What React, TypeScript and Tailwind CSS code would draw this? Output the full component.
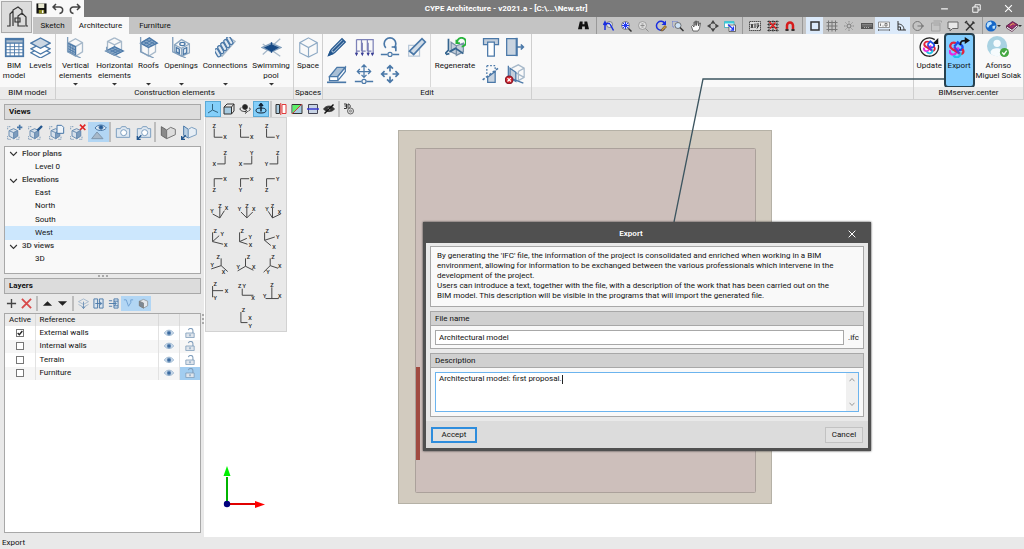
import { useState } from "react";
import type { ReactNode } from "react";
import { clsx } from "clsx";

type IconProps = { children: ReactNode; className?: string; stroke?: string };

// All line icons are drawn on a 24x24 grid
function Icon({ children, className = "size-5", stroke = "#4a78a8" }: IconProps) {
  return (
    <svg viewBox="0 0 24 24" aria-hidden="true" fill="none" stroke={stroke} strokeWidth="1.5" className={clsx("shrink-0", className)}>
      {children}
    </svg>
  );
}

const CUBE = "M12 2L20 6.500V17L12 22L4 17V6.500ZM4 6.500L12 11L20 6.500M12 11V22";

const icons = {
  grid: (
    <>
      <rect x="2" y="2" width="20" height="20" fill="#fff" strokeWidth="2" />
      <path d="M2 3H22V7H2Z" fill="#a9bacb" />
      <path d="M7 7V22M12 7V22M17 7V22M2 11H22M2 14.500H22M2 18H22" strokeWidth="1" />
    </>
  ),
  levels: (
    <>
      <path d="M1 18L12 12L23 18L12 24Z" fill="#fff" />
      <path d="M1 13.500L12 8L23 13.500L12 19.500Z" fill="#fff" />
      <path d="M1 7L12 1L23 7L12 13Z" fill="#ccd7e3" />
    </>
  ),
  vertical: (
    <>
      <path d={CUBE} stroke="#a7b9ca" />
      <path d="M3 7L12 11V21L3 16Z" fill="#9bb4cd" />
      <path d="M3 10L12 15M3 13L12 18M6 9V17M9 10V19" strokeWidth="1" />
      <path d="M3 0V17L18 24" stroke="#7f9dbb" />
    </>
  ),
  horizontal: (
    <>
      <path d="M12 1L20 5V15M12 1L4 5V15M4 5L12 9L20 5M12 9V13" stroke="#a7b9ca" />
      <path d="M2 16L12 11L22 16L12 21Z" fill="#88a8c8" />
      <path d="M6 14L16 19M9 12.500L19 17.500M6 18L16 13M9 19.500L19 14.500" strokeWidth="1" />
      <path d="M3 11V16L19 24" stroke="#7f9dbb" />
    </>
  ),
  roofs: (
    <>
      <path d={CUBE} stroke="#a7b9ca" />
      <path d="M3 7L13 1L22 7L12 12Z" fill="#88a8c8" />
      <path d="M6 5L16 10M9 3L19 8M6 9L16 3M9 11L19 5" strokeWidth="1" />
      <path d="M3 0V17L18 24" stroke="#7f9dbb" />
    </>
  ),
  openings: (
    <>
      <path d="M4 9L12 3L21 8V18L12 22L4 17Z" stroke="#8fa9c2" />
      <path d="M4 9L12 13L21 8M12 13V22" stroke="#8fa9c2" />
      <path d="M6 12L9.500 14V19L6 17ZM14 14L18 12V18L14 20Z" fill="#dbe5ef" />
      <ellipse cx="13" cy="8" rx="3" ry="1.800" />
      <path d="M2 0V17L17 24" stroke="#7f9dbb" />
    </>
  ),
  connections: (
    <>
      <path d="M1 16L17 1L23 5L8 22Z" stroke="#a7b9ca" />
      {[0, 3.5, 7, 10.5, 14].map((d) => (
        <rect key={d} x={1 + d} y={13 - d} width="4" height="10" rx="2" transform={`rotate(-30 ${3 + d} ${18 - d})`} fill="#e1e9f1" />
      ))}
    </>
  ),
  pool: (
    <>
      <path d="M2 20L22 2M2 8L22 22" stroke="#a7b9ca" />
      <path d="M1 12L12 7L23 12L12 17Z" fill="#9bb4cd" stroke="#7f9dbb" />
      <path d="M5 12L12 9L19 12L12 16Z" fill="#174a86" stroke="#174a86" />
      <path d="M12 6V18" stroke="#174a86" />
    </>
  ),
  space: <path d="M12 1L22 6.500V18L12 23L2 18V6.500ZM2 6.500L12 12L22 6.500M12 12V23" stroke="#8da9c4" strokeWidth="1.300" />,
  pencil: (
    <>
      <path d="M2 22L5 15L18 2L22 6L9 19Z" fill="#a9c0d8" stroke="#22568e" />
      <path d="M7 17L20 4" stroke="#22568e" strokeWidth="2" />
      <path d="M2 22L4 17L7 20Z" fill="#22568e" stroke="#22568e" />
    </>
  ),
  columns: (
    <>
      <path d="M3 3H9V17M3 3V21M9 3H16V17M10 7V21M16 3H23V17M17 7V21M23 3V21M3 17H7M10 17H14M17 17H21" stroke="#7d82b8" />
      <path d="M1 19H5L3 23ZM8 19H12L10 23ZM15 19H19L17 23ZM20 19H24L22 23Z" fill="#393e95" stroke="none" />
    </>
  ),
  rotate: (
    <>
      <path d="M7 13A7 7 0 1 1 17 13" strokeWidth="2" />
      <path d="M14 12H19V17M1 21H9M15 21H23" strokeWidth="2" />
      <circle cx="12" cy="21" r="2.500" />
    </>
  ),
  ruler: (
    <>
      <path d="M2 10H15V23H2Z" stroke="#b8c8d8" />
      <path d="M3 17L18 2L22 6L8 21Z" fill="#d2dde8" strokeWidth="2" />
    </>
  ),
  eraser: (
    <>
      <path d="M3 15L12 4H22L13 15Z" fill="#a9bfd5" />
      <path d="M3 15H13V20H3ZM13 15L22 4V9L13 20" fill="#fff" />
      <path d="M0 22H23" strokeWidth="2" />
    </>
  ),
  moveNode: (
    <>
      <path d="M12 1V16M4 9H20M9 4L12 1L15 4M7 6L4 9L7 12M17 6L20 9L17 12M9 13L12 16L15 13" />
      <path d="M1 21H9M15 21H23" strokeWidth="2" />
      <circle cx="12" cy="21" r="2.500" />
    </>
  ),
  move: <path d="M12 2V9M12 15V22M2 12H9M15 12H22M8.500 5.500L12 2L15.500 5.500M5.500 8.500L2 12L5.500 15.500M18.500 8.500L22 12L18.500 15.500M8.500 18.500L12 22L15.500 18.500" strokeWidth="2" />,
  regenerate: (
    <>
      <path d="M7 6L13 10V20L7 17ZM13 10L21 7V17L13 21Z" fill="#c3cedb" stroke="#7990a8" />
      <path d="M4 2V15L0 19M5 17L12 13L21 19M5 19L1 20" stroke="#35658f" strokeWidth="2" />
      <path d="M14 7A5 5 0 1 1 19 11" stroke="#28b43c" strokeWidth="2.200" />
      <path d="M17 7H13V3" stroke="#28b43c" strokeWidth="2" />
    </>
  ),
  tee: (
    <>
      <path d="M3 2H21V9H3Z" fill="#c3cedb" />
      <path d="M8 6H16V23H8Z" fill="#fff" />
    </>
  ),
  extend: (
    <>
      <path d="M2 2H14V22H2Z" fill="#c9d4e0" />
      <path d="M14 1V23" strokeWidth="2.500" />
      <path d="M14 12H22M19 9L22 12L19 15" strokeWidth="2" />
    </>
  ),
  trim: (
    <>
      <path d="M7 2H17V10M7 2V14" strokeDasharray="2 2" />
      <path d="M8 16L17 9V22H8Z" fill="#c9d4e0" />
      <path d="M2 19L22 4" strokeDasharray="3 2" strokeWidth="2" />
    </>
  ),
  removeView: (
    <>
      <path d="M8 5L16 1L23 5V16L16 20M23 5L16 9M16 9V20M12 10L23 16" stroke="#a7b9ca" />
      <path d="M4 2V16M6 5L13 10V21L6 17Z" fill="#c3cedb" />
      <path d="M4 16L22 23" />
      <circle cx="5" cy="19" r="4.500" fill="#d8262c" stroke="#8c1b2b" />
      <path d="M3 17L7 21M7 17L3 21" stroke="#fff" />
    </>
  ),
};

// Interlaced three-colour BIMserver.center mark
function BimMark() {
  return (
    <g strokeWidth="2.6" fill="none">
      <path d="M11 4C5 2 2 8 7 11L13 14" stroke="#e3233c" />
      <path d="M9 8L13 3L18 7C20 11 16 13 13 11" stroke="#1c50e8" />
      <path d="M4 12C3 17 9 19 11 15L14 9" stroke="#e82ae0" />
      <path d="M18 11C22 14 17 19 14 15L8 11" stroke="#e3233c" />
      <path d="M8 18C11 22 17 20 16 15" stroke="#20c4ea" />
      <path d="M9 8L15 16" stroke="#5a36dc" />
    </g>
  );
}

type RibbonItem = { icon: ReactNode; lines: string[]; width: string; menu?: boolean };

function RibbonButton({ icon, lines, width, menu }: RibbonItem) {
  return (
    <button className={clsx("flex flex-col items-center pt-[3px] hover:bg-[#e3f1fb]", width)}>
      <Icon className="size-[21px]">{icon}</Icon>
      <span className="mt-[3px] text-center leading-[10px] whitespace-nowrap">
        {lines.map((line) => <span key={line} className="block">{line}</span>)}
      </span>
      {menu && <Caret className={clsx("w-[5px]", lines.length === 1 ? "mt-3" : "mt-[2px]")} />}
    </button>
  );
}

function Caret({ className }: { className?: string }) {
  return (
    <svg viewBox="0 0 6 3" className={className} aria-hidden="true">
      <path d="M0 0H6L3 3Z" fill="#333" />
    </svg>
  );
}

function RibbonGroup({ label, children, className }: { label: string; children: ReactNode; className?: string }) {
  return (
    <section className={clsx("flex flex-col border-r border-[#cfcfcf]", className)}>
      <div className="flex h-[53px] shrink-0 px-px">{children}</div>
      <h2 className="h-3 bg-[#ebebeb] text-center leading-3 whitespace-nowrap">{label}</h2>
    </section>
  );
}

const MODEL_ITEMS: RibbonItem[] = [
  { icon: icons.grid, lines: ["BIM", "model"], width: "w-[26px]" },
  { icon: icons.levels, lines: ["Levels"], width: "w-[27px]" },
];

const ELEMENT_ITEMS: RibbonItem[] = [
  { icon: icons.vertical, lines: ["Vertical", "elements"], width: "w-[37px]", menu: true },
  { icon: icons.horizontal, lines: ["Horizontal", "elements"], width: "w-[41px]", menu: true },
  { icon: icons.roofs, lines: ["Roofs"], width: "w-[27px]", menu: true },
  { icon: icons.openings, lines: ["Openings"], width: "w-[38px]", menu: true },
  { icon: icons.connections, lines: ["Connections"], width: "w-[50px]", menu: true },
  { icon: icons.pool, lines: ["Swimming", "pool"], width: "w-[42px]", menu: true },
];

const EDIT_TOOLS = [
  { name: "Edit", icon: icons.pencil },
  { name: "Copy columns", icon: icons.columns },
  { name: "Rotate", icon: icons.rotate },
  { name: "Measure", icon: icons.ruler },
  { name: "Delete", icon: icons.eraser },
  { name: "Move node", icon: icons.moveNode },
  { name: "Move", icon: icons.move },
];

const WALL_TOOLS = [
  { name: "Join", icon: icons.tee },
  { name: "Extend", icon: icons.extend },
  { name: "Trim", icon: icons.trim },
  { name: "Remove", icon: icons.removeView },
];

function Ribbon() {
  return (
    <div className="flex h-[66px] shrink-0 border-b border-[#cfcfcf] bg-[#f9f9f9]">
      <RibbonGroup label="BIM model" className="w-14">
        {MODEL_ITEMS.map((item) => <RibbonButton key={item.lines[0]} {...item} />)}
      </RibbonGroup>
      <RibbonGroup label="Construction elements" className="w-[238px]">
        {ELEMENT_ITEMS.map((item) => <RibbonButton key={item.lines[0]} {...item} />)}
      </RibbonGroup>
      <RibbonGroup label="Spaces" className="w-[29px]">
        <RibbonButton icon={icons.space} lines={["Space"]} width="w-[27px]" />
      </RibbonGroup>
      <RibbonGroup label="Edit" className="w-[209px]">
        <div className="grid w-[107px] grid-cols-4 border-r border-[#d8d8d8]">
          {EDIT_TOOLS.map((tool) => (
            <button key={tool.name} aria-label={tool.name} className="grid place-items-center">
              <Icon>{tool.icon}</Icon>
            </button>
          ))}
        </div>
        <RibbonButton icon={icons.regenerate} lines={["Regenerate"]} width="w-[48px]" />
        <div className="grid w-12 grid-cols-2">
          {WALL_TOOLS.map((tool) => (
            <button key={tool.name} aria-label={tool.name} className="grid place-items-center">
              <Icon>{tool.icon}</Icon>
            </button>
          ))}
        </div>
      </RibbonGroup>
      <div className="flex flex-1 flex-col justify-end border-r border-[#cfcfcf]">
        <div className="h-3 bg-[#ebebeb]" />
      </div>
      <RibbonGroup label="BIMserver.center" className="w-[110px]">
        <button className="flex w-[29px] flex-col items-center pt-[3px]">
          <Icon className="size-[21px]">
            <path d="M18 3A10.500 10.500 0 1 0 22 9" stroke="#222" />
            <path d="M22 1V8H15Z" fill="#111" stroke="none" />
            <g transform="translate(2.500 2.500) scale(.8)"><BimMark /></g>
          </Icon>
          <span className="mt-[3px] leading-[10px]">Update</span>
        </button>
        <button className="-mt-px flex h-[55px] w-[31px] shrink-0 flex-col items-center rounded-[4px] border-2 border-[#27414f] bg-[#83ceff] pt-[2px]">
          <Icon className="size-[21px]">
            <g transform="translate(-3 3)"><BimMark /></g>
            <path d="M13 9C13 4 16 4 19 4" stroke="#111" strokeWidth="2" />
            <path d="M18 0L24 4L18 8Z" fill="#111" stroke="none" />
          </Icon>
          <span className="mt-[3px] leading-[10px]">Export</span>
        </button>
        <button className="flex w-12 flex-col items-center pt-[2px]">
          <Icon className="size-[22px]" stroke="none">
            <circle cx="11" cy="11" r="11" fill="#a9d2e2" />
            <circle cx="11" cy="8" r="4" fill="#f6fbfd" />
            <path d="M4 19V17C5 12 17 12 18 17V19C14 23 8 23 4 19Z" fill="#f6fbfd" />
            <circle cx="19" cy="18" r="5" fill="#45a843" />
            <path d="M16.500 18L18.500 20L21.500 16" stroke="#fff" />
          </Icon>
          <span className="mt-[3px] text-center leading-[10px] whitespace-nowrap">
            <span className="block">Afonso</span>
            <span className="block">Miguel Solak</span>
          </span>
        </button>
      </RibbonGroup>
    </div>
  );
}

type Tool = { name: string; icon: ReactNode; on?: boolean };

const NAV_TOOLS: Tool[] = [
  { name: "Previous zoom", icon: <><circle cx="13" cy="9" r="6" fill="#dfe6ee" stroke="#666" /><path d="M4 20V7H14M1 10L4 4L7 10M14 8L21 21" stroke="#1a2fe0" strokeWidth="3" /></> },
  { name: "Zoom all", icon: <><circle cx="11" cy="11" r="8" fill="#e8ebff" stroke="#555" /><path d="M11 4V18M4 11H18M6 6L16 16M16 6L6 16" stroke="#2038f0" strokeWidth="2" /><path d="M17 17L23 23" stroke="#333" strokeWidth="3" /></> },
  { name: "Zoom out", icon: <><circle cx="11" cy="11" r="8" fill="#ddd" stroke="#8e8e8e" /><path d="M7 11H15M9 8H13M9 14H13M17 17L23 23" stroke="#8e8e8e" strokeWidth="2" /></> },
  { name: "Redraw", icon: <><path d="M19 6A9 9 0 1 0 19 17" stroke="#1a2fe0" strokeWidth="3" /><path d="M22 1V10H13Z" fill="#1a2fe0" stroke="none" /><path d="M11 21L20 11L23 14L15 22Z" fill="#c79a3c" stroke="#6b4c1a" /></> },
  { name: "Zoom window", icon: <><path d="M1 3H11V14H1Z" stroke="#4a64d8" strokeDasharray="2 2" /><circle cx="12" cy="11" r="6" fill="#cfe4f8" stroke="#555" /><path d="M16 15L23 22" stroke="#333" strokeWidth="3" /></> },
  { name: "Pan", icon: <path d="M6 22L3 13L5 11L8 14V4H10V11L11 2H13V11L15 3H17V12L19 6H21L19 17L16 22Z" fill="#fff" stroke="#444" /> },
  { name: "Orbit", icon: <><circle cx="12" cy="12" r="6" stroke="#555" strokeWidth="2" /><path d="M12 0L16 6H8ZM12 24L16 18H8ZM0 12L6 8V16ZM24 12L18 8V16Z" fill="#444" stroke="none" /></> },
  { name: "Windows", icon: <><path d="M1 3H20V15H1Z" fill="#fff" stroke="#2aa7b8" /><path d="M1 3H20V7H1Z" fill="#39cddb" stroke="none" /><path d="M10 10H23V23H10Z" fill="#fff" stroke="#444" /><path d="M8 9L19 19M19 13V20H13" stroke="#2038f0" strokeWidth="2.500" /></> },
];

const SNAP_TOOLS: Tool[] = [
  { name: "DXF templates", icon: <><path d="M1 3H23V21H1Z" fill="#ddd" stroke="#222" strokeDasharray="3 1" /><path d="M4 8L8 16M8 8L4 16M12 7V16M15 8H20M15 12H19M16 17L20 10" stroke="#222" strokeWidth="2" /></> },
  { name: "Template snaps", icon: <><path d="M1 3H23M1 9H23M1 15H23M1 21H23M4 1V23M12 1V23M20 1V23" stroke="#333" strokeWidth="2" strokeDasharray="3 1" /><path d="M5 4L19 18M17 5L6 17" stroke="#e02020" strokeWidth="3" /></> },
  { name: "Magnet", icon: <><path d="M6 21V11A6 6 0 0 1 18 11V21" stroke="#d61c1c" strokeWidth="5" /><path d="M3 20H9M15 20H21" stroke="#333" strokeWidth="4" /></> },
];

const DRAW_TOOLS: Tool[] = [
  { name: "Frame", on: true, icon: <path d="M4 4H20V20H4Z" strokeWidth="3" /> },
  { name: "Grid", icon: <path d="M5 1V23M12 1V23M19 1V23M1 5H23M1 12H23M1 19H23" stroke="#777" strokeWidth="2" /> },
  { name: "Point", icon: <><circle cx="12" cy="12" r="4" stroke="#777" strokeWidth="2" /><path d="M12 2V5M12 19V22M2 12H5M19 12H22M5 5L7 7M17 17L19 19M19 5L17 7M5 19L7 17" stroke="#888" strokeWidth="2" /></> },
  { name: "Keyboard", icon: <><path d="M0 6H24V18H0Z" fill="#555" stroke="none" /><path d="M3 9H21M3 12H21M6 15H18" stroke="#ccc" strokeDasharray="2 2" /></> },
  { name: "Coordinates", on: true, icon: <><path d="M1 4H23V15H1Z" fill="#f4f4f4" stroke="#777" /><path d="M5 7V12M9 12H11M14 7H18V12H14ZM1 20H23M1 18V22M23 18V22" stroke="#555" /></> },
  { name: "Orthogonal", on: true, icon: <path d="M6 2V20H22M6 8C14 8 18 13 18 20M6 14H11V20" strokeWidth="2" /> },
  { name: "Polar", icon: <><circle cx="11" cy="12" r="9" stroke="#777" strokeWidth="2" /><path d="M11 12H23M19 9L23 12L19 15" stroke="#777" strokeWidth="2" /></> },
  { name: "Clipboard", icon: <path d="M3 6H20V22H3ZM7 2H23V5M7 10H20" stroke="#a2a2a2" strokeWidth="2" /> },
  { name: "Comment", icon: <path d="M2 4H22V17H11L6 22V17H2Z" fill="#e8e8e8" stroke="#666" strokeWidth="2" /> },
  { name: "Settings", icon: <><path d="M4 21L19 5M5 5L19 20" stroke="#333" strokeWidth="3" /><path d="M2 6L6 2M17 3L21 7" stroke="#333" strokeWidth="3" /></> },
];

function ToolStrip({ tools, className }: { tools: Tool[]; className: string }) {
  return (
    <div className={clsx("flex h-full border-r border-[#999]", className)}>
      {tools.map((tool) => (
        <button key={tool.name} aria-label={tool.name} className={clsx("grid flex-1 place-items-center", tool.on && "bg-[#dceafa]")}>
          <Icon className="size-3" stroke="#333">{tool.icon}</Icon>
        </button>
      ))}
    </div>
  );
}

function Header() {
  return (
    <header className="flex shrink-0">
      <button aria-label="CYPE Architecture" className="grid h-[34px] w-[33px] shrink-0 place-items-center border-2 border-[#f4f4f4] bg-[#dcdcdc] outline outline-1 -outline-offset-2 outline-[#aaa]">
        <svg viewBox="0 0 24 24" className="size-6" fill="none" stroke="#333" strokeWidth="1.200" aria-hidden="true">
          <path d="M2 21H5V9L8 6V21M8 19V5L13 2L17 5V10M10 13H15V17H10ZM13 17V11L17 8L21 12V21H23M13 17V21H20" />
        </svg>
      </button>
      <div className="min-w-0 flex-1">
        <div className="flex h-[17px] items-center justify-between bg-[#797979]">
          <div className="flex h-full w-[51px] items-center justify-around bg-[#f9f9f9]">
            <button aria-label="Save">
              <Icon className="size-[11px]" stroke="none">
                <path d="M1 1H23V23H1Z" fill="#111" />
                <path d="M5 1H18V11H5Z" fill="#e8e8d0" />
                <path d="M6 15H18V23H6Z" fill="#8b8a22" />
                <path d="M13 16H16V22H13Z" fill="#fff" />
              </Icon>
            </button>
            <button aria-label="Undo">
              <Icon className="size-3" stroke="#444"><path d="M2 8H15C24 8 23 20 15 21M8 2L2 8L8 14" strokeWidth="3" /></Icon>
            </button>
            <button aria-label="Redo">
              <Icon className="size-3" stroke="#444"><path d="M22 8H9C0 8 1 20 9 21M16 2L22 8L16 14" strokeWidth="3" /></Icon>
            </button>
          </div>
          <h1 className="flex-1 text-center font-bold text-white">CYPE Architecture - v2021.a - [C:\...\New.str]</h1>
          <div className="flex w-24 shrink-0">
            <button aria-label="Minimize" className="grid flex-1 place-items-center">
              <Icon className="size-[9px]" stroke="#fff"><path d="M3 13H21" strokeWidth="3" /></Icon>
            </button>
            <button aria-label="Restore" className="grid flex-1 place-items-center">
              <Icon className="size-[9px]" stroke="#fff"><path d="M2 8H16V22H2ZM8 8V2H22V16H16" strokeWidth="2.500" /></Icon>
            </button>
            <button aria-label="Close window" className="grid flex-1 place-items-center">
              <Icon className="size-[9px]" stroke="#fff"><path d="M3 3L21 21M21 3L3 21" strokeWidth="3" /></Icon>
            </button>
          </div>
        </div>
        <div className="flex h-[17px] items-stretch bg-[#c4c4c4]">
          <nav className="flex">
            <button className="w-[39px]">Sketch</button>
            <button className="w-[57px] bg-[#f9f9f9]">Architecture</button>
            <button className="w-[52px]">Furniture</button>
          </nav>
          <div className="ml-auto flex">
            <div className="flex w-[27px] items-center justify-center border-r border-[#999]">
              <button aria-label="Find">
                <Icon className="size-[11px]" stroke="none">
                  <path d="M4 3H10V9H14V3H20L24 20H15V14H9V20H0Z" fill="#111" />
                </Icon>
              </button>
            </div>
            <ToolStrip tools={NAV_TOOLS} className="w-[146px] px-[3px]" />
            <ToolStrip tools={SNAP_TOOLS} className="w-[60px] px-[3px]" />
            <ToolStrip tools={DRAW_TOOLS} className="w-[180px] px-[3px]" />
            <div className="flex w-[41px] items-center justify-around">
              <button aria-label="Language" className="flex items-center">
                <Icon className="size-3" stroke="none">
                  <circle cx="12" cy="12" r="11" fill="#1667c8" />
                  <path d="M5 5L12 3L14 8L9 11L6 16L3 12ZM15 12L21 11L19 18L15 17Z" fill="#bfe4ff" />
                </Icon>
                <Caret className="w-1" />
              </button>
              <button aria-label="Help" className="flex items-center">
                <Icon className="size-3" stroke="#4b1238">
                  <path d="M1 12L13 3L23 9L12 19Z" fill="#9c2f6c" />
                  <path d="M1 12V16L12 23L23 13V9L12 19Z" fill="#fff" />
                  <path d="M8 11L14 7L17 9" stroke="#ffd24a" />
                </Icon>
                <Caret className="w-1" />
              </button>
            </div>
          </div>
        </div>
      </div>
    </header>
  );
}

const SMALL_CUBE = (
  <>
    <path d="M1 8V4H5M1 18V23H6M14 23H18V19" stroke="#7f9dbb" strokeDasharray="2 1" />
    <path d="M3 10L10 7L16 10V18L10 22L3 18Z" fill="#d5dfea" stroke="#6c8fb3" />
    <path d="M3 10L10 13L16 10M10 13V22" stroke="#6c8fb3" />
    <path d="M10 13L16 10V18L10 22Z" fill="#7c9cbd" stroke="#6c8fb3" />
  </>
);

const CAMERA = (
  <>
    <path d="M2 7H8L10 4H16L18 7H22V20H2Z" fill="#dfe8f1" stroke="#7d9fc0" />
    <circle cx="13" cy="13" r="4.500" fill="#fff" stroke="#7d9fc0" />
  </>
);

const VIEW_TOOLS: Tool[][] = [
  [
    { name: "New view", icon: <>{SMALL_CUBE}<path d="M19 1V9M15 5H23" strokeWidth="2.500" /></> },
    { name: "Edit view", icon: <>{SMALL_CUBE}<path d="M14 10L21 3" stroke="#22568e" strokeWidth="3.500" /></> },
    { name: "Copy view", icon: <>{SMALL_CUBE}<path d="M12 2H19L22 5V14H12Z" fill="#eef3f8" /></> },
    { name: "Delete view", icon: <>{SMALL_CUBE}<path d="M15 1L23 9M23 1L15 9" stroke="#e02626" strokeWidth="2.500" /></> },
    { name: "Show view", on: true, icon: <><path d="M6 6C10 0 19 0 23 6C19 11 10 11 6 6Z" fill="#dce9f5" /><circle cx="15" cy="5" r="3" fill="#255b95" /><path d="M1 22L9 12L18 22Z" fill="#a8b9c9" stroke="#7f97ae" /></> },
  ],
  [
    { name: "Camera", icon: CAMERA },
    { name: "Send camera", icon: <>{CAMERA}<path d="M2 23L8 17M2 18V23H7" stroke="#22568e" strokeWidth="2" /></> },
  ],
  [
    { name: "3D box", icon: <><path d="M2 4L10 9V22L2 17Z" fill="#8a8a8a" stroke="#666" /><path d="M10 9L16 5L23 8V16L10 22Z" fill="#dcdcdc" stroke="#777" /></> },
    { name: "Send 3D box", icon: <><path d="M4 3L11 8V21L4 17Z" fill="#b8cfe4" /><path d="M11 8L16 5L23 8V16L11 21Z" fill="#e7eef5" stroke="#7d9fc0" /><path d="M1 23L7 17M1 18V23H6" stroke="#22568e" strokeWidth="2" /></> },
  ],
];

const LAYER_TOOLS: Tool[][] = [
  [
    { name: "Add layer", icon: <path d="M12 2V22M2 12H22" stroke="#444" strokeWidth="3" /> },
    { name: "Delete layer", icon: <path d="M2 2L22 22M22 2L2 22" stroke="#d84a4a" strokeWidth="4" /> },
  ],
  [
    { name: "Move up", icon: <path d="M2 17L12 7L22 17Z" fill="#222" stroke="none" /> },
    { name: "Move down", icon: <path d="M2 7H22L12 17Z" fill="#222" stroke="none" /> },
  ],
  [
    { name: "Assign layer", icon: <><path d="M1 8L12 2L23 8L12 14ZM1 14L12 20L23 14" stroke="#8da9c4" /><path d="M12 8V23M8 19L12 23L16 19" /></> },
    { name: "Filter columns", icon: <><path d="M2 2H10V22H2ZM14 2H22V22H14Z" fill="#dbe5ef" strokeWidth="2" /><path d="M5 12H19M15 8L19 12L15 16" strokeWidth="2" /></> },
    { name: "Move to layer", icon: <><path d="M13 2H22V22H13Z" fill="#dbe5ef" strokeWidth="2" /><path d="M2 6H9M2 18H9M13 7H22M13 17H22M2 12H18M14 8L18 12L14 16" strokeWidth="2" /></> },
    { name: "Line display", on: true, icon: <path d="M2 4H7L12 18L17 10V4H22" stroke="#6fa0d2" strokeWidth="2" /> },
    { name: "Solid display", on: true, icon: <><path d="M3 7L12 3L21 7V17L12 22L3 17Z" fill="#e4e8ed" stroke="#888" /><path d="M3 7L12 11V22L3 17Z" fill="#7d8894" stroke="#777" /></> },
  ],
];

function PanelTools({ groups, width, size, divider }: { groups: Tool[][]; width: string; size: string; divider: string }) {
  return (
    <div className="flex h-full items-center">
      {groups.map((tools, i) => (
        <div key={tools[0].name} className={clsx("flex h-full items-center", i > 0 && "border-l-2 border-[#bdbdbd]", i > 0 && divider)}>
          {tools.map((tool) => (
            <button key={tool.name} aria-label={tool.name} className={clsx("grid h-full place-items-center", width, tool.on && "bg-[#b2d6f4]")}>
              <Icon className={size}>{tool.icon}</Icon>
            </button>
          ))}
        </div>
      ))}
    </div>
  );
}

const TREE = [
  { label: "Floor plans", group: true },
  { label: "Level 0" },
  { label: "Elevations", group: true },
  { label: "East" },
  { label: "North" },
  { label: "South" },
  { label: "West" },
  { label: "3D views", group: true },
  { label: "3D" },
];

function ViewsPanel() {
  const [selected, setSelected] = useState("West");

  return (
    <section>
      <h2 className="h-4 border border-[#a8a8a8] bg-[#dcdcdc] pl-1 leading-[14px] font-bold">Views</h2>
      <div className="mt-[2px] mb-1 h-5">
        <PanelTools groups={VIEW_TOOLS} width="w-[21px]" size="size-4" divider="pl-px" />
      </div>
      <ul className="grid h-32 auto-rows-[minmax(0,1fr)] border border-[#a8a8a8] bg-[#f9f9f9] pb-[7px]">
        {TREE.map((node) => (
          <li key={node.label} className={clsx("flex", node.label === selected && "bg-[#cce7fd]")}>
            <button
              onClick={() => !node.group && setSelected(node.label)}
              className={clsx("flex flex-1 items-center", node.group ? "gap-1 pl-1 font-semibold text-[#444]" : "pl-[30px]")}
            >
              {node.group && <Icon className="size-[9px]" stroke="#333"><path d="M3 8L12 17L21 8" strokeWidth="3" /></Icon>}
              {node.label}
            </button>
          </li>
        ))}
      </ul>
    </section>
  );
}

const LAYERS = ["External walls", "Internal walls", "Terrain", "Furniture"];

function LayersPanel() {
  const [active, setActive] = useState<string[]>(["External walls"]);
  const toggle = (name: string) =>
    setActive((prev) => (prev.includes(name) ? prev.filter((n) => n !== name) : [...prev, name]));

  return (
    <section className="flex flex-1 flex-col">
      <h2 className="h-4 border border-[#a8a8a8] bg-[#dcdcdc] pl-1 leading-[14px] font-bold">Layers</h2>
      <div className="my-[2px] h-[15px]">
        <PanelTools groups={LAYER_TOOLS} width="w-[15px]" size="size-[11px]" divider="ml-[2px] pl-[2px]" />
      </div>
      <div className="flex-1 border border-[#a8a8a8] bg-white">
        <table className="h-[66px] w-full table-fixed border-collapse text-left">
          <thead className="bg-[#ebebeb]">
            <tr>
              <th className="w-[30px] border-r border-[#d9d9d9] p-0 pl-1 font-normal">Active</th>
              <th className="border-r border-[#d9d9d9] p-0 pl-1 font-normal">Reference</th>
              <th className="w-[21px] border-r border-[#d9d9d9] p-0" />
              <th className="w-[21px] p-0" />
            </tr>
          </thead>
          <tbody>
            {LAYERS.map((name) => (
              <tr key={name} className="leading-none even:bg-[#f6f6f6] last:bg-[#dfeefa]">
                <td className="border-r border-[#e2e2e2] p-0">
                  <label className="flex justify-center">
                    <input type="checkbox" aria-label={`${name} active`} checked={active.includes(name)} onChange={() => toggle(name)}
                      className="peer size-2 appearance-none border border-[#777] bg-white" />
                    <Icon className="-ml-2 hidden size-2 peer-checked:block" stroke="#222"><path d="M5 12L10 17L19 6" strokeWidth="4" /></Icon>
                  </label>
                </td>
                <td className="border-r border-[#e2e2e2] p-0 pl-1">{name}</td>
                <td className="border-r border-[#e2e2e2] p-0">
                  <button aria-label={`Show ${name}`} className="grid w-full place-items-center">
                    <Icon className="size-[10px]" stroke="#8aa9c9">
                      <path d="M1 12C6 3 18 3 23 12C18 20 6 20 1 12Z" fill="#dce8f3" strokeWidth="2" />
                      <circle cx="12" cy="12" r="5" fill="#3c6ba0" />
                    </Icon>
                  </button>
                </td>
                <td className={clsx("p-0", name === "Furniture" && "bg-[#a2cdf0]")}>
                  <button aria-label={`Lock ${name}`} className="grid w-full place-items-center">
                    <Icon className="size-[10px]" stroke="#7f9dbb">
                      <path d="M8 5C10 -1 19 0 19 6V12" strokeWidth="2.500" />
                      <path d="M2 12H22V23H2Z" fill="#dfe5ec" strokeWidth="2" />
                      <path d="M12 15V20" strokeWidth="3" />
                    </Icon>
                  </button>
                </td>
              </tr>
            ))}
          </tbody>
        </table>
      </div>
    </section>
  );
}

// path + letters of each axis orientation, drawn on an 81x80 grid
type Axis = { d: string; letters: [string, number, number][]; middle?: boolean };

const AXES: Axis[] = [
  { d: "M25 32V58H50", letters: [["Z", 25, 23], ["X", 58, 58]] },
  { d: "M23 32V58H49", letters: [["Y", 23, 23], ["X", 57, 58]] },
  { d: "M23 32V58H48", letters: [["Z", 23, 23], ["Y", 57, 58]] },
  { d: "M34 57H58V32", letters: [["X", 25, 57], ["Z", 58, 24]] },
  { d: "M32 57H57V32", letters: [["X", 23, 57], ["Y", 57, 24]] },
  { d: "M32 57H57V32", letters: [["Y", 23, 57], ["Z", 57, 24]] },
  { d: "M50 23H25V48", letters: [["X", 58, 23], ["Z", 25, 57]] },
  { d: "M49 23H23V48", letters: [["X", 57, 23], ["Y", 23, 57]] },
  { d: "M48 23H23V48", letters: [["Y", 57, 23], ["Z", 23, 57]] },
  { d: "M42 30V60L20 48M42 60L56 38", letters: [["Z", 42, 23], ["Y", 18, 40], ["X", 62, 31]] },
  { d: "M42 30V60L24 42M42 60L60 42", letters: [["Z", 42, 23], ["Y", 20, 34], ["X", 63, 34]] },
  { d: "M41 30V60L28 40M41 60L66 48", letters: [["Z", 41, 23], ["Y", 24, 32], ["X", 62, 41]] },
  { d: "M20 22V50L40 32M20 50L52 58", letters: [["Z", 28, 18], ["Y", 49, 28], ["X", 60, 61]] },
  { d: "M20 22V50L42 40M20 50L44 58", letters: [["Z", 28, 18], ["Y", 52, 35], ["X", 53, 61]] },
  { d: "M17 22V46L48 36M17 46L36 62", letters: [["Z", 25, 18], ["Y", 57, 35], ["X", 46, 66]] },
  { d: "M46 22V44L16 54M46 44L66 62", letters: [["Z", 37, 18], ["Y", 19, 43], ["X", 53, 63]] },
  { d: "M38 22V46L14 60M38 46L62 58", letters: [["Z", 47, 18], ["Y", 16, 48], ["X", 63, 48]] },
  { d: "M34 22V44L14 64M34 44L58 52", letters: [["Z", 42, 18], ["Y", 27, 63], ["X", 63, 46]] },
  { d: "M20 24V58M20 38H52", letters: [["Z", 28, 18], ["Y", 28, 60], ["X", 62, 38]] },
  { d: "M28 32V52H62", letters: [["Z", 20, 23], ["Y", 34, 23], ["X", 61, 61]] },
  { d: "M39 28V62M20 62H60", letters: [["Z", 39, 20], ["Y", 17, 55], ["X", 63, 55]] },
  { d: "M24 24V56H44", letters: [["Z", 32, 19], ["X", 52, 43], ["Y", 52, 66]], middle: true },
];

function AxisPalette() {
  return (
    <div className="absolute top-[17px] left-px grid h-[215px] w-[82px] auto-rows-[minmax(0,1fr)] grid-cols-3 border border-[#d2d2d2] bg-[#e9e9e9]">
      {AXES.map((axis, i) => (
        <button key={i} aria-label={`Axis orientation ${i + 1}`} className={clsx("min-h-0", axis.middle && "col-start-2")}>
          <svg viewBox="0 0 81 80" className="size-full" fill="none" stroke="#444" strokeWidth="3" aria-hidden="true">
            <path d={axis.d} />
            {axis.letters.map(([letter, x, y]) => (
              <text key={letter} x={x} y={y + 6} textAnchor="middle" fontSize="17" fill="#222" stroke="none" fontWeight="500">{letter}</text>
            ))}
          </svg>
        </button>
      ))}
    </div>
  );
}

const CANVAS_TOOLS: Tool[][] = [
  [
    { name: "Axes", on: true, icon: <path d="M11 2V14L2 20M11 14L22 19" stroke="#31637f" strokeWidth="2" /> },
    { name: "Perspective", icon: <><path d="M2 8H17V22H2Z" fill="#a8cbe0" strokeWidth="2" /><path d="M2 8L8 2H22V16L17 22M17 8L22 2" strokeWidth="2" /></> },
    { name: "Rotate view", icon: <><circle cx="12" cy="8" r="5" fill="#222" /><path d="M4 9C-2 14 8 18 14 17M20 9C24 12 22 15 19 16M12 13L17 17L12 21" strokeWidth="2" /></> },
    { name: "Turntable", on: true, icon: <><path d="M12 3V17M8 6L12 1L16 6" stroke="#123" strokeWidth="3" /><ellipse cx="12" cy="15" rx="10" ry="5" stroke="#123" strokeWidth="2" /></> },
  ],
  [
    { name: "Section", icon: <><path d="M2 3H9V21H2Z" fill="#a8cbe0" strokeWidth="2" /><path d="M14 3H22V21H14Z" fill="#fff" stroke="#e03a3a" strokeWidth="2" /><path d="M11.500 0V24" stroke="#e03a3a" strokeWidth="2" /></> },
    { name: "Diagonal section", icon: <><path d="M2 3H22V21H2Z" fill="#a8cbe0" strokeWidth="2" /><path d="M3 4H20L3 20Z" fill="#5ff06a" stroke="none" /><path d="M2 22L22 2" stroke="#d23a3a" strokeWidth="2" /></> },
    { name: "Horizontal section", icon: <><path d="M3 3H21V21H3Z" fill="#c7d3e4" stroke="#445" strokeWidth="2" /><path d="M0 12H24" stroke="#3a3ad0" strokeWidth="3" /></> },
    { name: "Hide", icon: <><path d="M1 12C6 4 18 4 23 12C18 19 6 19 1 12Z" fill="#333" /><circle cx="12" cy="12" r="3" fill="#fff" /><path d="M3 21L21 3" stroke="#111" strokeWidth="3" /></> },
  ],
  [
    { name: "3D settings", icon: <><path d="M2 2H7V11H2M3 6H7M10 2V11C16 11 16 2 10 2Z" strokeWidth="2" /><circle cx="15" cy="16" r="6" fill="#ddd" stroke="#666" strokeWidth="2" /><circle cx="15" cy="16" r="2" stroke="#666" /></> },
  ],
];

function Workspace() {
  return (
    <main className="relative flex flex-1 flex-col bg-white">
      <div className="flex h-[17px] shrink-0 items-center bg-[#e9e9e9]">
        {CANVAS_TOOLS.map((tools, i) => (
          <div key={tools[0].name} className={clsx("flex h-4 pl-px", i > 0 && "ml-px border-l-2 border-[#c6c6c6]")}>
            {tools.map((tool) => (
              <button key={tool.name} aria-label={tool.name}
                className={clsx("grid w-4 place-items-center", tool.on && "border border-[#5aa9d6] bg-[#84cffa]")}>
                <Icon className="size-3" stroke="#333">{tool.icon}</Icon>
              </button>
            ))}
          </div>
        ))}
      </div>
      <AxisPalette />
      {/* Building plan and origin marker */}
      <svg viewBox="0 0 820 420" className="h-[420px] w-full" preserveAspectRatio="xMinYMin meet" aria-hidden="true">
        <rect x="194.500" y="13.500" width="373" height="373" fill="#d2cbbf" stroke="#b5b1a6" />
        <rect x="211.500" y="31.500" width="340" height="344" rx="1" fill="#cdbfbb" stroke="#aba19b" />
        <rect x="212" y="250" width="4" height="93" fill="#a04a40" />
        <path d="M23 387V360" stroke="#00b400" strokeWidth="2" />
        <path d="M19.500 359L23 349L26.500 359Z" fill="#00f000" />
        <path d="M23 387H52" stroke="#e00000" strokeWidth="2" />
        <path d="M51 384V391L61 387.500Z" fill="#f00" />
        <circle cx="23" cy="387" r="3.200" fill="#00007d" />
      </svg>
    </main>
  );
}

function ExportDialog({ onClose }: { onClose: () => void }) {
  const [fileName, setFileName] = useState("Architectural model");
  const [description, setDescription] = useState("Architectural model: first proposal.");

  return (
    <div role="dialog" aria-labelledby="export-title"
      className="absolute top-[222px] left-[423px] flex w-[448px] flex-col border-[3px] border-t-0 border-[#505050] bg-[#e9e9e9] shadow-[0_0_2px_#333]">
      <div className="relative flex h-[21px] items-center justify-center bg-[#505050] pt-[2px] text-white">
        <h2 id="export-title" className="pr-8 font-semibold">Export</h2>
        <button aria-label="Close" onClick={onClose} className="absolute right-3">
          <Icon className="size-2" stroke="#fff"><path d="M2 2L22 22M22 2L2 22" strokeWidth="3" /></Icon>
        </button>
      </div>
      <div className="flex flex-col gap-1 px-1 pt-[3px] pb-1">
        <div className="h-[61px] border border-[#a8a8a8] bg-[#f9f9f9] py-1 pr-5 pl-[6px] leading-[10px]">
          <p>
            By generating the 'IFC' file, the information of the project is consolidated and enriched when working in a BIM
            environment, allowing for information to be exchanged between the various professionals which intervene in the
            development of the project.
          </p>
          <p>
            Users can introduce a text, together with the file, with a description of the work that has been carried out on the
            BIM model. This description will be visible in the programs that will import the generated file.
          </p>
        </div>
        <div className="border border-[#a8a8a8] bg-[#f9f9f9]">
          <label htmlFor="file-name" className="block h-[14px] border-b border-[#a8a8a8] bg-[#d0d0d0] pl-1 leading-[13px]">File name</label>
          <div className="flex items-center gap-1 p-1 pb-[3px]">
            <input id="file-name" value={fileName} onChange={(e) => setFileName(e.target.value)}
              className="h-[15px] min-w-0 flex-1 border border-[#a8a8a8] bg-white px-[3px] outline-none" />
            <span>.ifc</span>
          </div>
        </div>
        <div className="border border-[#a8a8a8] bg-[#f9f9f9]">
          <label htmlFor="description" className="block h-[14px] border-b border-[#a8a8a8] bg-[#d0d0d0] pl-1 leading-[13px]">Description</label>
          <div className="p-1">
            <div className="relative flex h-10 border border-[#6cb4ee] bg-white">
              <textarea id="description" value={description} onChange={(e) => setDescription(e.target.value)}
                className="peer flex-1 resize-none px-[3px] outline-none" />
              <span className="absolute top-[2px] left-[126px] h-[9px] w-px bg-[#222] peer-focus:hidden" />
              <div className="flex w-3 flex-col justify-between bg-[#f0f0f0] px-[3px] py-1">
                <Icon className="size-[6px]" stroke="#999"><path d="M2 17L12 6L22 17" strokeWidth="4" /></Icon>
                <Icon className="size-[6px]" stroke="#999"><path d="M2 7L12 18L22 7" strokeWidth="4" /></Icon>
              </div>
            </div>
          </div>
        </div>
      </div>
      <div className="flex h-[27px] items-center justify-between bg-[#dcdcdc] px-[5px]">
        <button onClick={onClose} className="h-4 w-[46px] border-2 border-[#2e8ddd] bg-[#e1e1e1] leading-3">Accept</button>
        <button onClick={onClose} className="h-4 w-[38px] border border-[#c2c2c2] bg-[#e1e1e1] leading-[14px]">Cancel</button>
      </div>
    </div>
  );
}

export default function App() {
  const [open, setOpen] = useState(true);

  return (
    <div className="relative flex min-h-screen flex-col overflow-hidden bg-[#e9e9e9] font-['Roboto','Open_Sans',sans-serif] text-[8px] leading-3 text-[#111]">
      <Header />
      <Ribbon />
      <div className="flex flex-1">
        <aside className="flex w-[201px] shrink-0 flex-col pt-1 pb-1 pl-1">
          <ViewsPanel />
          <div className="flex h-1 items-center justify-center">
            <div className="w-[10px] border-t-2 border-dotted border-[#aaa]" />
          </div>
          <LayersPanel />
        </aside>
        <div className="flex w-[3px] shrink-0 items-center justify-center">
          <div className="h-[10px] border-l-2 border-dotted border-[#aaa]" />
        </div>
        <Workspace />
      </div>
      <footer className="h-3 shrink-0 pl-[2px]">Export</footer>
      {open && (
        <>
          {/* Callout from the ribbon button to its dialog */}
          <svg viewBox="0 0 271 144" className="pointer-events-none absolute top-[78px] right-[80px] w-[271px]" fill="none" stroke="#3c5560" strokeWidth="1.300" aria-hidden="true">
            <path d="M271 1H30L1 144" />
          </svg>
          <ExportDialog onClose={() => setOpen(false)} />
        </>
      )}
    </div>
  );
}
